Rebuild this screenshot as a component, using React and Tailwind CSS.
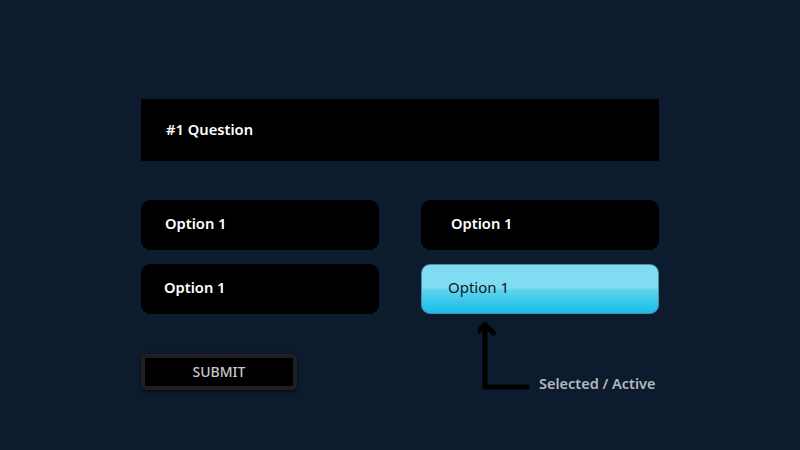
export default function App() {
  return (
    <div
      className="w-[800px] h-[450px] bg-[#0d1b2e] overflow-hidden pt-[99px] pl-[141px]"
      style={{ fontFamily: '"Noto Sans", "Open Sans", sans-serif' }}
    >
      <div className="w-[518px] flex flex-col">
        <div className="h-[62px] bg-black rounded-[1px] flex items-center pl-[25px] pb-[2px] text-white text-[14.7px] font-semibold">
          #1 Question
        </div>
        <div className="mt-[39px] grid grid-cols-[238px_238px] gap-x-[42px] gap-y-[14px]">
          <div className="h-[50px] bg-black rounded-[9px] flex items-center pl-[24px] pb-[3px] text-white text-[14.7px] font-semibold">
            Option 1
          </div>
          <div className="h-[50px] bg-black rounded-[9px] flex items-center pl-[30px] pb-[3px] text-white text-[14.7px] font-semibold">
            Option 1
          </div>
          <div className="h-[50px] bg-black rounded-[9px] flex items-center pl-[23px] pb-[3px] text-white text-[14.7px] font-semibold">
            Option 1
          </div>
          <div className="relative h-[50px] rounded-[9px] overflow-hidden border border-[#4a8fa6] bg-[linear-gradient(to_bottom,#7fdcf1_0%,#7fdcf1_48%,#5fd3ee_52%,#16bde8_100%)] flex items-center pl-[26px] pb-[4px] text-[#0c1a24] text-[15px] font-normal">
            Option 1
          </div>
        </div>
        <div className="mt-[4px] flex items-start h-[76px]">
          <div className="mt-[36px] w-[156px] h-[36px] rounded-[5px] bg-black border-[4px] border-[#1f1f1f] shadow-[0_2px_4px_rgba(0,0,0,0.6)] flex items-center justify-center pb-[1px] text-[#c8c8c8] text-[14px] font-medium">
            SUBMIT
          </div>
          <svg
            className="ml-[181px] mt-[2px]"
            width="60"
            height="72"
            viewBox="0 0 60 72"
          >
            <path
              d="M7 6 L7 67 L49 67"
              fill="none"
              stroke="#000"
              strokeWidth="5"
              strokeLinecap="round"
              strokeLinejoin="round"
            />
            <path
              d="M-1.5 13 L7 4.5 L15.5 13"
              fill="none"
              stroke="#000"
              strokeWidth="5"
              strokeLinecap="round"
              strokeLinejoin="round"
            />
          </svg>
          <div className="ml-[1px] mt-[55px] text-[14.5px] font-semibold text-[#b3b8c0] whitespace-nowrap">
            Selected / Active
          </div>
        </div>
      </div>
    </div>
  );
}
